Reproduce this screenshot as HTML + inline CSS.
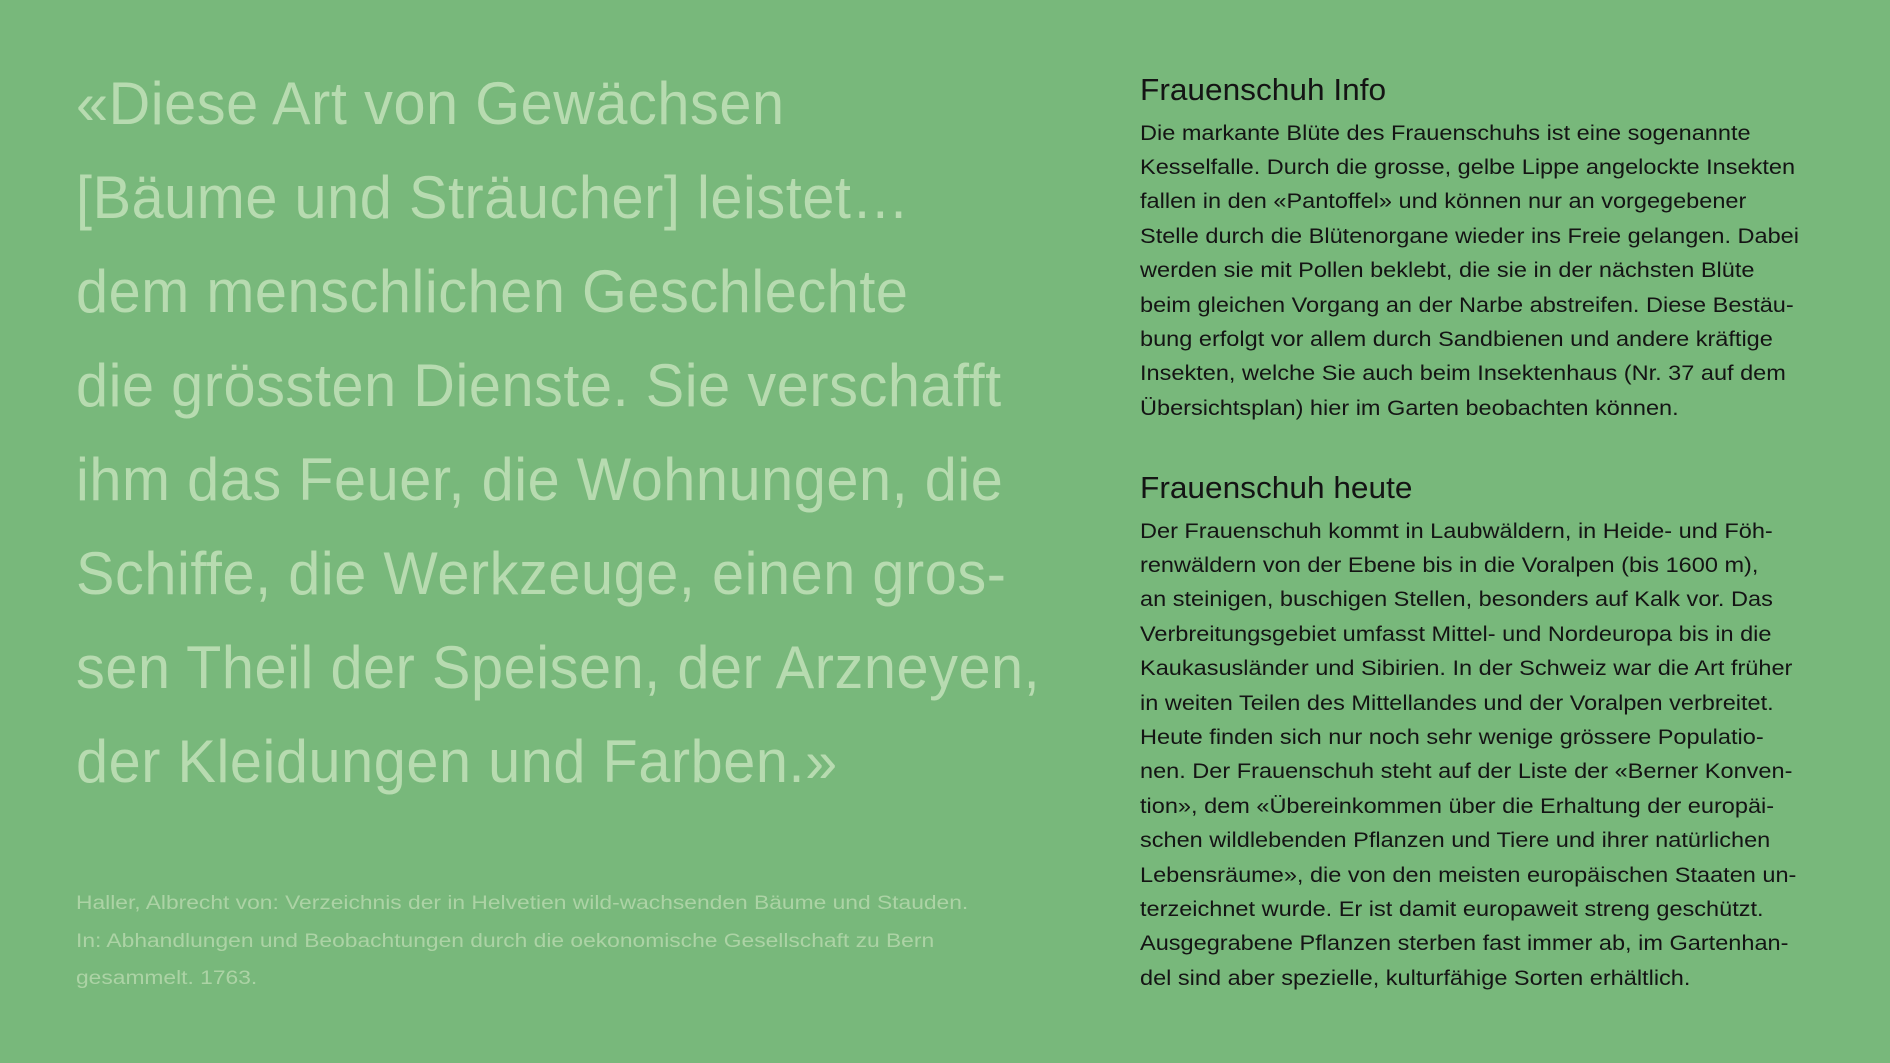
<!DOCTYPE html>
<html><head><meta charset="utf-8"><style>
html,body{margin:0;padding:0}
body{width:1890px;height:1063px;background:#78b87b;position:relative;overflow:hidden;font-family:"Liberation Sans",sans-serif}
.q{position:absolute;left:76px;top:57px;font-size:60px;line-height:94px;color:#b7dbb0;white-space:nowrap;transform:scaleX(0.96);letter-spacing:0.6px;transform-origin:0 0}
.h{position:absolute;left:1140px;font-size:31px;line-height:36px;color:#141414;white-space:nowrap;transform:scaleX(1.02);transform-origin:0 0}
.b{position:absolute;left:1140px;font-size:21px;line-height:34.4px;color:#141414;white-space:nowrap;transform:scaleX(1.12);transform-origin:0 0}
.c{position:absolute;left:76px;top:885px;font-size:19px;line-height:37.5px;color:#acd3a5;white-space:nowrap;transform:scaleX(1.2);transform-origin:0 0}
</style></head><body>
<div class="q">«Diese Art von Gewächsen<br>[Bäume und Sträucher] leistet…<br>dem menschlichen Geschlechte<br>die grössten Dienste. Sie verschafft<br>ihm das Feuer, die Wohnungen, die<br>Schiffe, die Werkzeuge, einen gros-<br>sen Theil der Speisen, der Arzneyen,<br>der Kleidungen und Farben.»</div>
<div class="h" style="top:72px">Frauenschuh Info</div>
<div class="b" style="top:116.5px">Die markante Blüte des Frauenschuhs ist eine sogenannte<br>Kesselfalle. Durch die grosse, gelbe Lippe angelockte Insekten<br>fallen in den «Pantoffel» und können nur an vorgegebener<br>Stelle durch die Blütenorgane wieder ins Freie gelangen. Dabei<br>werden sie mit Pollen beklebt, die sie in der nächsten Blüte<br>beim gleichen Vorgang an der Narbe abstreifen. Diese Bestäu-<br>bung erfolgt vor allem durch Sandbienen und andere kräftige<br>Insekten, welche Sie auch beim Insektenhaus (Nr. 37 auf dem<br>Übersichtsplan) hier im Garten beobachten können.</div>
<div class="h" style="top:470px">Frauenschuh heute</div>
<div class="b" style="top:514.5px">Der Frauenschuh kommt in Laubwäldern, in Heide- und Föh-<br>renwäldern von der Ebene bis in die Voralpen (bis 1600 m),<br>an steinigen, buschigen Stellen, besonders auf Kalk vor. Das<br>Verbreitungsgebiet umfasst Mittel- und Nordeuropa bis in die<br>Kaukasusländer und Sibirien. In der Schweiz war die Art früher<br>in weiten Teilen des Mittellandes und der Voralpen verbreitet.<br>Heute finden sich nur noch sehr wenige grössere Populatio-<br>nen. Der Frauenschuh steht auf der Liste der «Berner Konven-<br>tion», dem «Übereinkommen über die Erhaltung der europäi-<br>schen wildlebenden Pflanzen und Tiere und ihrer natürlichen<br>Lebensräume», die von den meisten europäischen Staaten un-<br>terzeichnet wurde. Er ist damit europaweit streng geschützt.<br>Ausgegrabene Pflanzen sterben fast immer ab, im Gartenhan-<br>del sind aber spezielle, kulturfähige Sorten erhältlich.</div>
<div class="c">Haller, Albrecht von: Verzeichnis der in Helvetien wild-wachsenden Bäume und Stauden.<br>In: Abhandlungen und Beobachtungen durch die oekonomische Gesellschaft zu Bern<br>gesammelt. 1763.</div>
</body></html>
